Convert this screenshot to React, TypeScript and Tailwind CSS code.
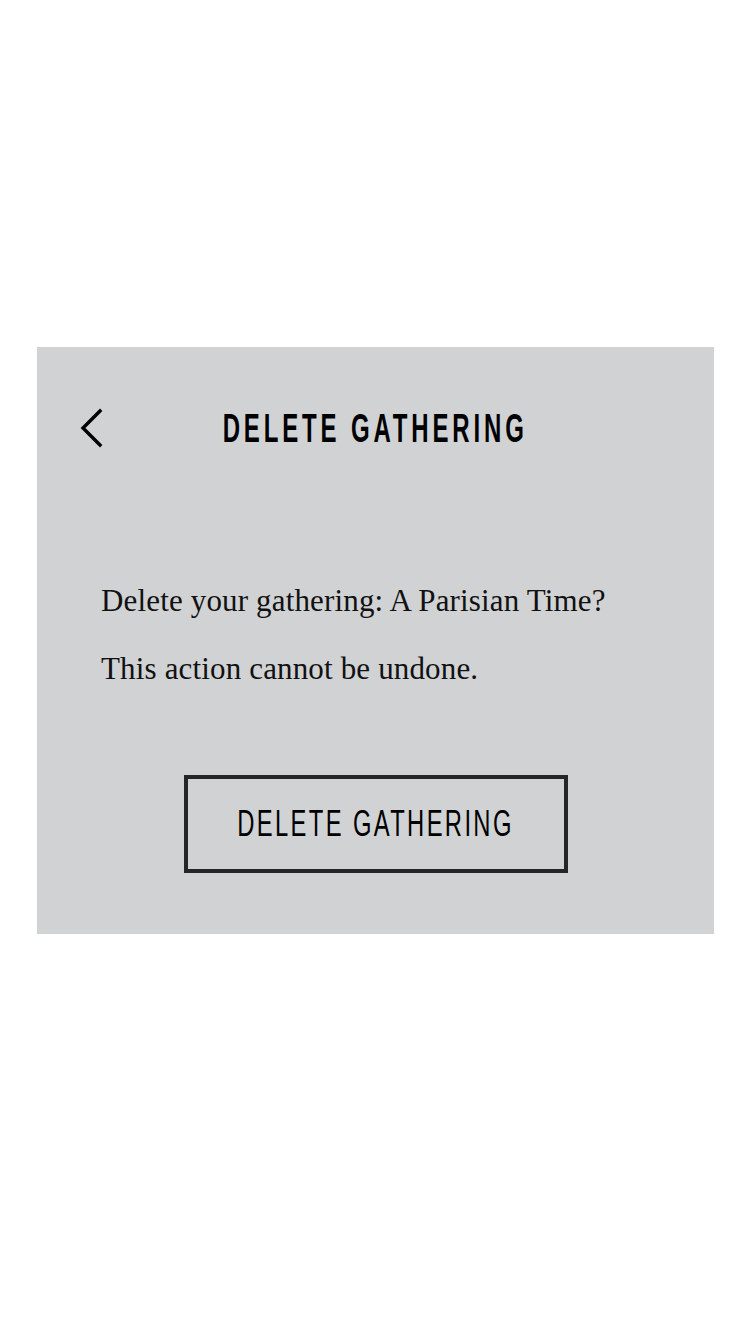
import React from 'react';

const sans = { fontFamily: '"Liberation Sans", Arial, sans-serif' };
const serif = { fontFamily: '"Liberation Serif", "DejaVu Serif", serif' };

const DeleteGathering: React.FC = () => {
  return (
    <div className="bg-white min-h-[1335px] w-full pt-[347px] px-[37px]">
      <div className="bg-[#d1d2d4] h-[587px] w-full flex flex-col">
        {/* Header */}
        <div className="relative flex items-center justify-center h-[162px]">
          <button className="absolute left-[42px] top-[61px] text-black" aria-label="Back">
            <svg width="26" height="40" viewBox="0 0 26 40" fill="none">
              <path d="M21 3 L4 20 L21 37" stroke="currentColor" strokeWidth="3.4" strokeLinecap="square" />
            </svg>
          </button>
          <h1
            style={sans}
            className="inline-block scale-x-[0.6] text-[40px] font-bold tracking-[0.16em] text-black leading-none whitespace-nowrap"
          >
            DELETE GATHERING
          </h1>
        </div>

        {/* Body */}
        <div style={serif} className="px-[64px] pt-[76px] text-[#111] text-[31px] tracking-[0.005em] leading-none">
          <p>Delete your gathering: A Parisian Time?</p>
          <p className="mt-[37px]">This action cannot be undone.</p>
        </div>

        {/* Action */}
        <div className="flex justify-center mt-[91px]">
          <button className="w-[384px] h-[98px] border-4 border-[#262626] flex items-center justify-center">
            <span
              style={sans}
              className="inline-block scale-x-[0.66] text-[36px] tracking-[0.1em] text-black leading-none whitespace-nowrap"
            >
              DELETE GATHERING
            </span>
          </button>
        </div>
      </div>
    </div>
  );
};

export default DeleteGathering;
